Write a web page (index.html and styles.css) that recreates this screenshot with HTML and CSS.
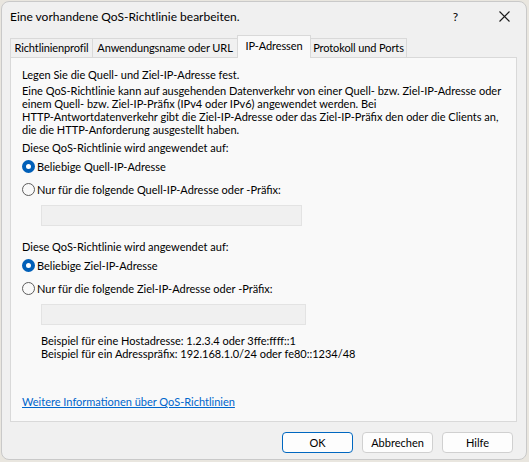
FILE: index.html
```html
<!DOCTYPE html>
<html lang="de">
<head>
<meta charset="utf-8">
<link rel="stylesheet" href="styles.css">
</head>
<body>
<div class="window">
  <div class="titlebar">
    <span class="title">Eine vorhandene QoS-Richtlinie bearbeiten.</span>
    <span class="help">?</span>
    <svg class="close" width="11" height="11" viewBox="0 0 11 11"><path d="M0.5 0.5 L10.5 10.5 M10.5 0.5 L0.5 10.5" stroke="#1a1a1a" stroke-width="1.1" fill="none"/></svg>
  </div>
  <div class="tabs">
    <div class="tab t1">Richtlinienprofil</div>
    <div class="tab t2">Anwendungsname oder URL</div>
    <div class="tab t3 active">IP-Adressen</div>
    <div class="tab t4">Protokoll und Ports</div>
  </div>
  <div class="panel">
    <p class="line heading">Legen Sie die Quell- und Ziel-IP-Adresse fest.</p>
    <p class="para">Eine QoS-Richtlinie kann auf ausgehenden Datenverkehr von einer Quell- bzw. Ziel-IP-Adresse oder<br>einem Quell- bzw. Ziel-IP-Präfix (IPv4 oder IPv6) angewendet werden. Bei<br>HTTP-Antwortdatenverkehr gibt die Ziel-IP-Adresse oder das Ziel-IP-Präfix den oder die Clients an,<br>die die HTTP-Anforderung ausgestellt haben.</p>
    <p class="line applies">Diese QoS-Richtlinie wird angewendet auf:</p>
    <div class="radio"><span class="dot on"></span><span>Beliebige Quell-IP-Adresse</span></div>
    <div class="radio"><span class="dot"></span><span>Nur für die folgende Quell-IP-Adresse oder -Präfix:</span></div>
    <div class="input w1"></div>
    <p class="line applies second">Diese QoS-Richtlinie wird angewendet auf:</p>
    <div class="radio"><span class="dot on"></span><span>Beliebige Ziel-IP-Adresse</span></div>
    <div class="radio"><span class="dot"></span><span>Nur für die folgende Ziel-IP-Adresse oder -Präfix:</span></div>
    <div class="input w2"></div>
    <p class="example">Beispiel für eine Hostadresse: 1.2.3.4 oder 3ffe:ffff::1<br>Beispiel für ein Adresspräfix: 192.168.1.0/24 oder fe80::1234/48</p>
    <a class="link" href="#">Weitere Informationen über QoS-Richtlinien</a>
  </div>
  <div class="buttons">
    <button class="btn default">OK</button>
    <button class="btn">Abbrechen</button>
    <button class="btn">Hilfe</button>
  </div>
</div>
</body>
</html>
```

FILE: styles.css
```css
* { box-sizing: border-box; }
html, body { margin: 0; padding: 0; }
body {
  width: 529px;
  height: 462px;
  background: #e9e6df;
  font-family: "Lato", "Noto Sans", sans-serif;
  font-size: 11px;
  color: #000;
  overflow: hidden;
}
.window {
  margin: 1px 2px 0 1px;
  height: 459px;
  background: #f0f0f0;
  border: 1px solid #c9c9c9;
  border-radius: 8px;
  display: flex;
  flex-direction: column;
}
.titlebar {
  height: 29px;
  flex: none;
  display: flex;
  align-items: center;
  padding-left: 8px;
}
.title {
  font-size: 12px;
  flex: 1;
}
.help {
  font-size: 12px;
  margin-right: 41px;
}
.close { margin-right: 16px; }
.tabs {
  display: flex;
  align-items: flex-end;
  margin-left: 8px;
  height: 26px;
  flex: none;
  position: relative;
  z-index: 1;
}
.tab {
  height: 19px;
  line-height: 18px;
  text-align: center;
  border: 1px solid #d9d9d9;
  border-bottom: none;
  margin-right: -1px;
  background: #f0f0f0;
  white-space: nowrap;
  letter-spacing: -0.1px;
}
.t1 { width: 83px; }
.t2 { width: 146px; }
.t3 { width: 74px; }
.t4 { width: 97px; }
.tab.active {
  height: 23px;
  line-height: 20px;
  background: #f9f9f9;
  margin-bottom: -1px;
}
.panel {
  margin: 0 9px 0 8px;
  height: 365px;
  flex: none;
  border: 1px solid #d9d9d9;
  background: #f9f9f9;
  padding: 10px 11px 0 11px;
  display: flex;
  flex-direction: column;
  align-items: flex-start;
}
p { margin: 0; }
.line, .para, .example { line-height: 13px; white-space: nowrap; }
.para { margin-top: 3px; }
.applies { margin-top: 5px; }
.applies.second { margin-top: 14px; }
.radio {
  display: flex;
  align-items: center;
  height: 20px;
  margin-top: 2px;
  white-space: nowrap;
}
.radio + .radio { margin-top: 3px; }
.dot {
  width: 13px;
  height: 13px;
  border-radius: 50%;
  border: 1px solid #5d5d5d;
  background: #f9f9f9;
  margin: 0 2px 0 0;
  flex: none;
}
.dot.on {
  border: 4px solid #005fb8;
  background: #fff;
}
.input {
  margin: 6px 0 0 19px;
  height: 21px;
  border: 1px solid #e3e3e3;
  background: #f0f0f0;
}
.w1 { width: 261px; }
.w2 { width: 265px; }
.example { margin: 9px 0 0 19px; }
.link {
  margin-top: 35px;
  color: #0066cc;
  text-decoration: underline;
  line-height: 13px;
}
.buttons {
  display: flex;
  justify-content: flex-end;
  gap: 9px;
  padding: 10px 13px 0 0;
}
.btn {
  width: 71px;
  height: 21px;
  font-family: inherit;
  font-size: 11px;
  background: #fdfdfd;
  border: 1px solid #d0d0d0;
  border-radius: 4px;
  padding: 0;
  color: #000;
}
.btn.default { border-color: #0067c0; }
```
